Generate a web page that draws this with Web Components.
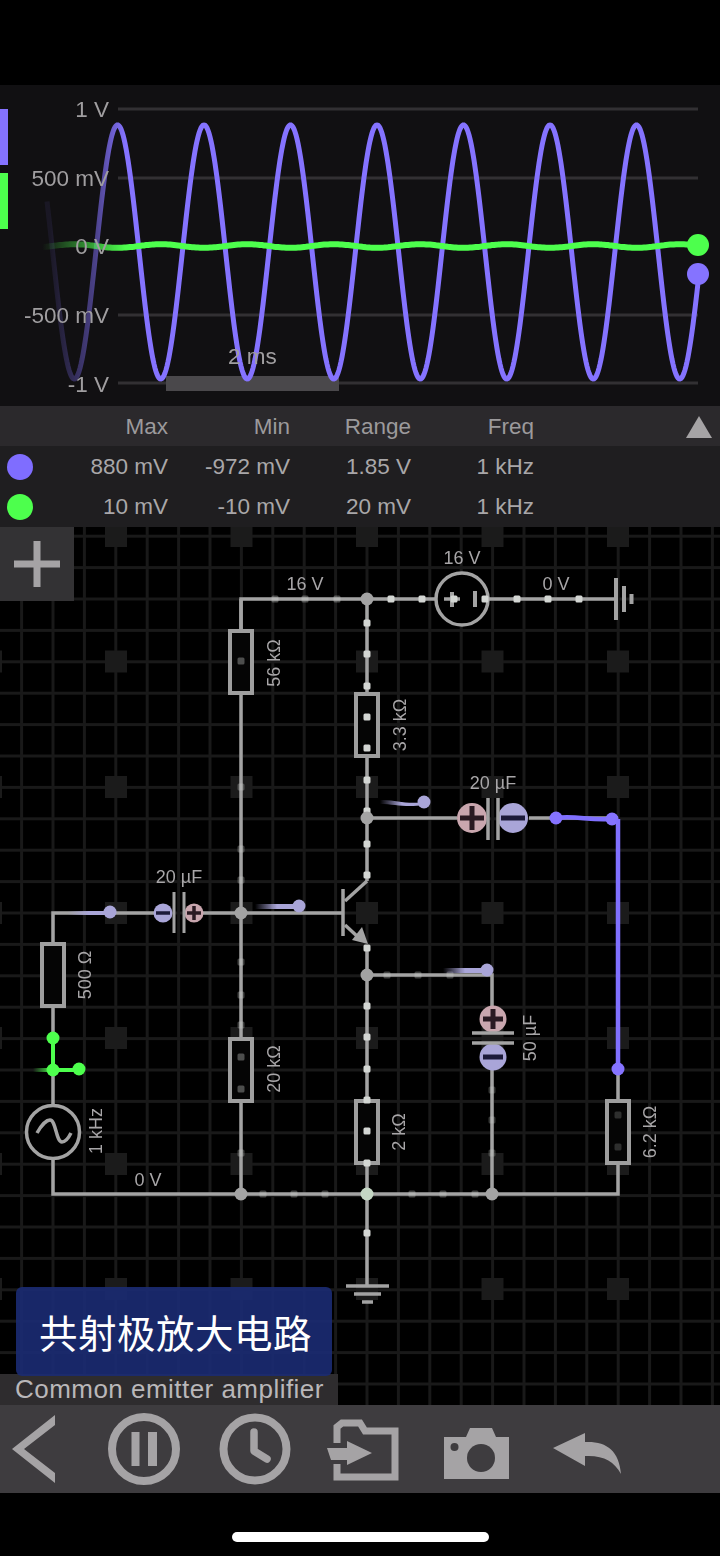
<!DOCTYPE html>
<html>
<head>
<meta charset="utf-8">
<title>Common emitter amplifier</title>
<style>
  html, body { margin: 0; padding: 0; background: #000; }
  body { width: 720px; height: 1556px; overflow: hidden; font-family: "Liberation Sans", Arial, sans-serif; display: flex; flex-direction: column; }
</style>
</head>
<body>
  <scope-panel></scope-panel>
  <measure-table>
    <measure-head><span>Max</span><span>Min</span><span>Range</span><span>Freq</span></measure-head>
    <measure-row color="#7f6dff"><span>880 mV</span><span>-972 mV</span><span>1.85 V</span><span>1 kHz</span></measure-row>
    <measure-row color="#4dff4d"><span>10 mV</span><span>-10 mV</span><span>20 mV</span><span>1 kHz</span></measure-row>
  </measure-table>
  <circuit-canvas>
    <add-button></add-button>
    <title-card heading="共射极放大电路">Common emitter amplifier</title-card>
  </circuit-canvas>
  <tool-bar></tool-bar>
  <home-bar></home-bar>

<script>
const FONT = '"Liberation Sans", Arial, sans-serif';

// SCOPE
class scopePanel extends HTMLElement {
  constructor() {
    super();
    this.attachShadow({ mode: 'open' });
    let sine = '', ripple = '';
    for (let x = 47; x <= 698; x += 1) {
      const phase = 2 * Math.PI * (x - 117.5) / 86.5;
      sine += (sine ? 'L' : 'M') + x + ' ' + (252 - 127 * Math.cos(phase)).toFixed(1);
    }
    sine += 'L698 274';
    for (let x = 40; x <= 698; x += 2) {
      const phase = 2 * Math.PI * (x - 117.5) / 86.5;
      ripple += (ripple ? 'L' : 'M') + x + ' ' + (246 + 1.8 * Math.cos(phase)).toFixed(1);
    }
    const lines = [109, 178, 315, 383].map(y => `<rect x="118" y="${y - 1.5}" width="580" height="3" fill="#323033"/>`).join('');
    const labels = [['1 V', 117], ['500 mV', 186], ['0 V', 254], ['-500 mV', 323], ['-1 V', 392]]
      .map(l => `<text x="109" y="${l[1]}" text-anchor="end">${l[0]}</text>`).join('');
    this.shadowRoot.innerHTML = `
      <style>
        :host { display: block; height: 321px; margin-top: 85px; background: #111012; flex: none; }
        svg { display: block; filter: blur(0.5px); }
        text { font: 22.5px ${FONT}; fill: #a09ea0; }
      </style>
      <svg width="720" height="321" viewBox="0 85 720 321">
        <defs>
          <linearGradient id="fadeP" gradientUnits="userSpaceOnUse" x1="50" x2="125" y1="0" y2="0">
            <stop offset="0" stop-color="#8573ff" stop-opacity="0.08"/>
            <stop offset="0.6" stop-color="#8573ff" stop-opacity="0.5"/>
            <stop offset="1" stop-color="#8573ff"/>
          </linearGradient>
          <linearGradient id="fadeG" gradientUnits="userSpaceOnUse" x1="42" x2="125" y1="0" y2="0">
            <stop offset="0" stop-color="#4dff4d" stop-opacity="0"/>
            <stop offset="1" stop-color="#4dff4d"/>
          </linearGradient>
        </defs>
        ${lines}
        <rect x="0" y="109" width="8" height="56" fill="#8573ff"/>
        <rect x="0" y="173" width="8" height="56" fill="#4dff4d"/>
        <rect x="166" y="376" width="173" height="15" fill="#4a484b"/>
        <path d="${sine}" fill="none" stroke="url(#fadeP)" stroke-width="5"/>
        <path d="${ripple}" fill="none" stroke="url(#fadeG)" stroke-width="6"/>
        ${labels}
        <text x="252.5" y="364" text-anchor="middle">2 ms</text>
        <circle cx="698" cy="274" r="11" fill="#8573ff"/>
        <circle cx="698" cy="245" r="11" fill="#4dff4d"/>
      </svg>`;
  }
}
window.customElements.define('scope-panel', scopePanel);

// MEASUREMENTS
class measureTable extends HTMLElement {
  constructor() {
    super();
    this.attachShadow({ mode: 'open' });
    this.shadowRoot.innerHTML = `
      <style>
        :host { display: block; flex: none; background: #1f1e20; }
      </style>
      <slot></slot>`;
  }
}
window.customElements.define('measure-table', measureTable);

const rowStyle = `
  :host {
    display: grid;
    grid-template-columns: 168px 122px 121px 123px 1fr;
    align-items: center;
    font-size: 22.5px;
    position: relative;
    box-sizing: border-box;
    padding-top: 1px;
  }
  ::slotted(span) { text-align: right; white-space: nowrap; }
`;

class measureHead extends HTMLElement {
  constructor() {
    super();
    this.attachShadow({ mode: 'open' });
    this.shadowRoot.innerHTML = `
      <style>
        ${rowStyle}
        :host { height: 40px; background: #2b292c; color: #9c9a9c; }
        .arrow { justify-self: end; margin-right: 8px; width: 0; height: 0;
          border-left: 13px solid transparent; border-right: 13px solid transparent; border-bottom: 22px solid #a5a3a5; }
      </style>
      <slot></slot>
      <div class="arrow"></div>`;
  }
}
window.customElements.define('measure-head', measureHead);

class measureRow extends HTMLElement {
  constructor() {
    super();
    this.attachShadow({ mode: 'open' });
    this.shadowRoot.innerHTML = `
      <style>
        ${rowStyle}
        :host { height: 40.5px; color: #a9a7a9; }
        .dot { position: absolute; left: 7px; top: 7.5px; width: 26px; height: 26px; border-radius: 50%; background: ${this.getAttribute('color')}; }
      </style>
      <div class="dot"></div>
      <slot></slot>`;
  }
}
window.customElements.define('measure-row', measureRow);

// CIRCUIT
const WIRE = '#a3a3a3';
const PINK = '#c9a6ae';
const LILAC = '#a9a5d8';
const VIOLET = '#8070ff';
const GREEN = '#4dff4d';

const wire = (d, w = 3.5, c = WIRE) => `<path d="${d}" fill="none" stroke="${c}" stroke-width="${w}"/>`;
const node = (x, y, r = 6.5, c = '#a3a3a3') => `<circle cx="${x}" cy="${y}" r="${r}" fill="${c}"/>`;
const spark = (x, y, o = 1) => `<rect x="${x - 3.5}" y="${y - 3.5}" width="7" height="7" rx="1.5" fill="#d3d6d3" opacity="${o}"/>`;
const resistor = (x, y) => `<rect x="${x - 11}" y="${y}" width="22" height="62" fill="#050505" stroke="#9e9e9e" stroke-width="4"/>`;
const plusMark = (x, y, a) => wire(`M${x - a} ${y}H${x + a}M${x} ${y - a}V${y + a}`, a > 9 ? 5 : 3.5, '#2a1a22');
const minusMark = (x, y, a) => wire(`M${x - a} ${y}H${x + a}`, a > 9 ? 5 : 3.5, '#1c1a3a');
const label = (t, x, y) => `<text x="${x}" y="${y}" text-anchor="middle">${t}</text>`;
const vlabel = (t, x, y) => `<text x="${x}" y="${y}" text-anchor="middle" dominant-baseline="central" transform="rotate(-90 ${x} ${y})">${t}</text>`;

function buildGrid() {
  let out = '';
  for (let i = -2; i < 25; i++) out += `<rect x="${(53 + i * 31.4 - 1.5).toFixed(1)}" y="527" width="3" height="878" fill="#191919"/>`;
  for (let i = 0; i < 29; i++) out += `<rect x="0" y="${(536.2 + i * 31.4 - 1.5).toFixed(1)}" width="720" height="3" fill="#191919"/>`;
  [-9, 116, 241.5, 367, 492.5, 618].forEach(x => {
    [536, 661.5, 787, 913, 1038, 1164, 1289].forEach(y => {
      out += `<rect x="${x - 11}" y="${y - 11}" width="22" height="22" fill="#1b1b1b"/>`;
    });
  });
  return out;
}

function buildCircuit() {
  let s = '';
  // wires
  s += wire('M241 630V599H436M488 599H616');
  s += wire('M367 599V881M367 945V1286');
  s += wire('M241 599V1194');
  s += wire('M53 943V913H163M203 913H343');
  s += wire('M53 1007V1106M53 1158V1194H618V1164');
  s += wire('M367 818H457M529 818H618');
  s += wire('M367 975H492V1006M492 1070V1194');
  s += wire('M618 1069V1100');
  // resistors
  s += resistor(241, 631) + resistor(367, 694) + resistor(53, 944) + resistor(241, 1039) + resistor(367, 1101) + resistor(618, 1101);
  // battery
  s += `<circle cx="462" cy="599" r="26" fill="#000" stroke="${WIRE}" stroke-width="3.5"/>`;
  s += wire('M444 599H460', 3.5) + wire('M452 592V607', 4) + wire('M475 591V607', 4);
  s += wire('M616 578V620M624 586V612M631.5 594V604', 4);
  // ac source
  s += `<circle cx="53" cy="1132" r="26.5" fill="#000" stroke="${WIRE}" stroke-width="3.5"/>`;
  s += wire('M37 1133C42 1124 47 1120 50 1120C56 1120 56 1142 62 1142C66 1142 69 1137 71 1133', 3.5);
  // transistor
  s += wire('M343 889V936', 3.5) + wire('M345 901L367 881', 3.5) + wire('M345 925L358 937', 3.5);
  s += `<path d="M368 944L352 940L362 927Z" fill="${WIRE}"/>`;
  // ground
  s += wire('M346 1286H389', 3.5) + wire('M354 1294H381', 3.5) + wire('M362 1302H373', 3.5);
  // moving charge
  [[391, 1], [422, 1], [454, 1], [485, 1], [517, 1], [548, 1], [579, 1], [275, .35], [305, .35], [337, .35]].forEach(p => { s += spark(p[0], 599, p[1]); });
  [623, 654, 686, 717, 748, 780, 811, 844, 875, 948, 1006, 1037, 1069, 1100, 1131, 1163, 1233].forEach(y => { s += spark(367, y); });
  [787, 849, 880, 962, 995, 1025, 1153].forEach(y => { s += spark(241, y, .3); });
  [661, 1057, 1089].forEach(y => { s += spark(241, y, .35); });
  [1115, 1147].forEach(y => { s += spark(618, y, .2); });
  [1090, 1120, 1153].forEach(y => { s += spark(492, y, .25); });
  [263, 294, 325, 412, 443, 475].forEach(x => { s += spark(x, 1194, .3); });
  [387, 418, 450].forEach(x => { s += spark(x, 975, .3); });
  // junctions
  s += node(367, 599) + node(367, 818) + node(241, 913) + node(367, 975) + node(241, 1194) + node(492, 1194);
  s += node(367, 1194, 6.5, '#c4d6c4');
  // capacitors
  s += `<circle cx="163" cy="913" r="9.5" fill="${LILAC}"/><circle cx="194" cy="913" r="9.5" fill="${PINK}"/>`;
  s += minusMark(163, 913, 7) + plusMark(194, 913, 7) + wire('M174 892V933M184 892V933', 3);
  s += `<circle cx="472" cy="818" r="15" fill="${PINK}"/><circle cx="513" cy="818" r="15" fill="${LILAC}"/>`;
  s += plusMark(472, 818, 12) + minusMark(513, 818, 12) + wire('M488 798V840M498 798V840', 3.5);
  s += `<circle cx="493" cy="1019" r="13.5" fill="${PINK}"/><circle cx="493" cy="1057" r="13.5" fill="${LILAC}"/>`;
  s += plusMark(493, 1019, 10) + minusMark(493, 1057, 10) + wire('M472 1033H514M472 1043H514', 3.5);
  // probes
  s += `<defs>
    <linearGradient id="t1" x1="0" x2="1" y1="0" y2="0"><stop offset="0" stop-color="${LILAC}" stop-opacity="0"/><stop offset="0.5" stop-color="${LILAC}"/></linearGradient>
    <linearGradient id="t2" x1="1" x2="0" y1="0" y2="0"><stop offset="0" stop-color="${GREEN}"/><stop offset="1" stop-color="${GREEN}" stop-opacity="0"/></linearGradient>
  </defs>`;
  s += `<rect x="68" y="911" width="42" height="4" fill="url(#t1)"/>` + node(110, 912, 6.5, LILAC);
  s += `<rect x="255" y="904" width="44" height="5" fill="url(#t1)"/>` + node(299, 906, 6.5, LILAC);
  s += `<path d="M380 800C395 799 405 805 424 802L424 805C405 808 395 804 380 804Z" fill="url(#t1)"/>` + node(424, 802, 6.5, LILAC);
  s += `<rect x="443" y="968" width="44" height="5" fill="url(#t1)"/>` + node(487, 970, 6.5, LILAC);
  s += wire('M556 818C575 815 590 821 612 819', 4.5, VIOLET) + node(556, 818, 6.5, '#8573ff') + node(612, 819, 6.5, '#8573ff');
  s += wire('M618 819V1069', 4.5, VIOLET) + node(618, 1069, 6.5, '#8573ff');
  s += wire('M53 1038V1070H79', 4, GREEN);
  s += `<rect x="33" y="1068" width="20" height="4" fill="url(#t2)"/>`;
  s += node(53, 1038, 6.5, GREEN) + node(53, 1070, 6.5, GREEN) + node(79, 1069, 6.5, GREEN);
  // values
  s += label('16 V', 305, 590) + label('16 V', 462, 564) + label('0 V', 556, 590) + label('0 V', 148, 1186);
  s += label('20 µF', 179, 883) + label('20 µF', 493, 789);
  s += vlabel('56 kΩ', 274, 663) + vlabel('3.3 kΩ', 400, 725) + vlabel('500 Ω', 85, 975) + vlabel('20 kΩ', 274, 1069);
  s += vlabel('1 kHz', 96, 1131) + vlabel('2 kΩ', 399, 1132) + vlabel('6.2 kΩ', 650, 1132) + vlabel('50 µF', 530, 1038);
  return s;
}

class circuitCanvas extends HTMLElement {
  constructor() {
    super();
    this.attachShadow({ mode: 'open' });
    this.shadowRoot.innerHTML = `
      <style>
        :host { display: block; position: relative; height: 878px; flex: none; background: #000; overflow: hidden; }
        svg { display: block; filter: blur(0.5px); }
        text { font: 18px ${FONT}; fill: #a8a6a8; }
      </style>
      <svg width="720" height="878" viewBox="0 527 720 878">
        ${buildGrid()}
        ${buildCircuit()}
      </svg>
      <slot></slot>`;
  }
}
window.customElements.define('circuit-canvas', circuitCanvas);

class addButton extends HTMLElement {
  constructor() {
    super();
    this.attachShadow({ mode: 'open' });
    this.shadowRoot.innerHTML = `
      <style>
        :host { position: absolute; left: 0; top: 0; width: 74px; height: 74px; background: #333234; display: grid; place-items: center; }
        svg { display: block; }
      </style>
      <svg width="46" height="46" viewBox="0 0 46 46"><path d="M19.5 0H26.5V19.5H46V26.5H26.5V46H19.5V26.5H0V19.5H19.5Z" fill="#a5a3a5"/></svg>`;
  }
}
window.customElements.define('add-button', addButton);

class titleCard extends HTMLElement {
  constructor() {
    super();
    this.attachShadow({ mode: 'open' });
    this.shadowRoot.innerHTML = `
      <style>
        :host { position: absolute; left: 0; top: 760px; width: 338px; display: block; }
        .caption {
          margin-top: -2px; height: 31px; box-sizing: border-box; padding-left: 15px;
          background: #2e2c2e; color: #b9b7b9; font-size: 26px; letter-spacing: 0.47px; line-height: 30px; white-space: nowrap;
        }
        .heading {
          position: relative; margin-left: 16px; width: 316px; height: 89px; border-radius: 6px;
          background: rgba(27, 43, 115, 0.9); color: #fff; box-sizing: border-box; padding-left: 23px;
          font: 400 38.5px/89px "Noto Sans CJK SC", sans-serif; letter-spacing: 0.5px; white-space: nowrap;
        }
      </style>
      <div class="heading">${this.getAttribute('heading')}</div>
      <div class="caption"><slot></slot></div>`;
  }
}
window.customElements.define('title-card', titleCard);

// TOOLBAR
class toolBar extends HTMLElement {
  constructor() {
    super();
    this.attachShadow({ mode: 'open' });
    const ICON = '#a5a3a5', BG = '#3e3c3f';
    const icon = (x, w, body) => `<svg width="${w}" height="88" viewBox="${x} 1405 ${w} 88">${body}</svg>`;
    this.shadowRoot.innerHTML = `
      <style>
        :host { display: flex; height: 88px; flex: none; background: ${BG}; }
        svg { display: block; flex: none; }
      </style>
      ${icon(0, 100, `<path d="M55 1415V1425L24 1449L55 1473V1483L12 1449Z" fill="${ICON}"/>`)}
      ${icon(100, 110, `<circle cx="144" cy="1449" r="32" fill="none" stroke="${ICON}" stroke-width="8"/>
        <rect x="131.5" y="1432" width="8" height="34" fill="${ICON}"/><rect x="148" y="1432" width="9" height="34" fill="${ICON}"/>`)}
      ${icon(210, 110, `<circle cx="255" cy="1449" r="31.5" fill="none" stroke="${ICON}" stroke-width="8"/>
        <path d="M254 1432V1451L267 1459" fill="none" stroke="${ICON}" stroke-width="7.5" stroke-linecap="round" stroke-linejoin="round"/>`)}
      ${icon(320, 115, `<path d="M337 1443V1427L342 1423H360L365 1431H395V1477H337V1464" fill="none" stroke="${ICON}" stroke-width="7"/>
        <path d="M327 1448H347V1441L372 1453L347 1465V1460H331Z" fill="${ICON}"/>`)}
      ${icon(435, 110, `<path d="M444 1437H466L470 1428H492L496 1437H509V1479H444Z" fill="${ICON}"/>
        <circle cx="481" cy="1458" r="14" fill="${BG}"/><circle cx="454.5" cy="1447" r="4" fill="${BG}"/>`)}
      ${icon(545, 100, `<path d="M553 1448L585 1433V1442C606 1441 619 1450 621 1474C614 1461 603 1455 585 1456V1466Z" fill="${ICON}"/>`)}`;
  }
}
window.customElements.define('tool-bar', toolBar);

class homeBar extends HTMLElement {
  constructor() {
    super();
    this.attachShadow({ mode: 'open' });
    this.shadowRoot.innerHTML = `
      <style>
        :host { display: flex; justify-content: center; flex: 1; padding-top: 39px; background: #000; }
        div { width: 257px; height: 10px; border-radius: 5px; background: #fff; }
      </style>
      <div></div>`;
  }
}
window.customElements.define('home-bar', homeBar);
</script>
</body>
</html>
